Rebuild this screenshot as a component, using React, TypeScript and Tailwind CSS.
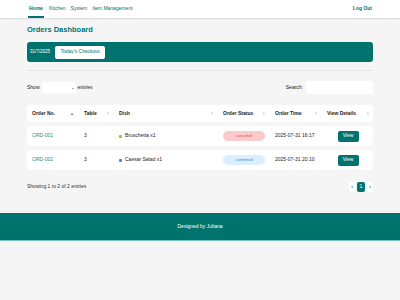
import React from 'react';

const teal = 'bg-[#00736f]';

const orders = [
    { id: 'ORD-001', table: 3, dish: 'Bruschetta x1', dot: 'bg-[#f59e0b]', status: 'canceled', time: '2025-07-31 16:17' },
    { id: 'ORD-002', table: 3, dish: 'Caesar Salad x1', dot: 'bg-[#3b82f6]', status: 'confirmed', time: '2025-07-31 20:10' },
];

const cols = 'grid grid-cols-[52px_35px_104px_52px_52px_52px] items-center';

const SortIcon = ({ active }: { active?: boolean }) => (
    <span className={`text-[4px] leading-none ${active ? 'text-gray-500' : 'text-gray-300'}`}>{active ? '▲' : '⇕'}</span>
);

export default function App() {
    const headers = ['Order No.', 'Table', 'Dish', 'Order Status', 'Order Time', 'View Details'];

    return (
        <div className="min-h-[300px] bg-[#f5f5f5] font-['Liberation_Sans',Arial,sans-serif] text-[#222]">
            <nav className="h-[18px] bg-white shadow-[0_1px_2px_rgba(0,0,0,0.12)] flex items-center justify-between px-[28px]">
                <div className="flex items-center gap-[5px] text-[5px] text-[#00736f] h-full">
                    <span className="font-bold h-full flex items-center border-b-2 border-[#00736f] px-[1px] pt-[2px]">Home</span>
                    <span>Kitchen</span>
                    <span>System</span>
                    <span>Item Management</span>
                </div>
                <span className="text-[5px] font-bold text-[#00736f]">Log Out</span>
            </nav>

            <main className="px-[27px] pt-[6px]">
                <h1 className="text-[7.5px] leading-[12px] font-bold text-[#00736f] mb-[6px]">Orders Dashboard</h1>

                <div className={`${teal} h-[20px] rounded-[3px] flex items-center px-[3px] gap-[5px]`}>
                    <span className="text-[4.5px] text-white">31/7/2025</span>
                    <button className="bg-white rounded-[2px] h-[13px] w-[50px] text-[5px] text-[#00736f]">Today's Checkout</button>
                </div>

                <div className="mt-[8px] border-t border-[#e6e6e6]" />

                <div className="mt-[10px] flex items-center justify-between text-[5px]">
                    <div className="flex items-center gap-[2px]">
                        <span>Show</span>
                        <div className="w-[34px] h-[11px] bg-white flex items-center justify-end pr-[2px] text-[4px]">⌄</div>
                        <span>entries</span>
                    </div>
                    <div className="flex items-center gap-[3px]">
                        <span>Search:</span>
                        <div className="w-[67px] h-[13px] bg-white rounded-[2px]" />
                    </div>
                </div>

                <div className={`${cols} mt-[11px] bg-white rounded-[3px] h-[17px] text-[5px] font-bold`}>
                    {headers.map((h, i) => (
                        <div key={h} className="flex items-center justify-between pl-[5px] pr-[5px]">
                            <span>{h}</span>
                            <SortIcon active={i === 0} />
                        </div>
                    ))}
                </div>

                {orders.map((o) => (
                    <div key={o.id} className={`${cols} mt-[4px] bg-white rounded-[3px] h-[20px] text-[5px]`}>
                        <span className="pl-[5px] text-[#1c8f88]">{o.id}</span>
                        <span className="pl-[5px]">{o.table}</span>
                        <div className="pl-[5px] flex items-center gap-[3px]">
                            <span className={`w-[3px] h-[3px] rounded-[1px] ${o.dot}`} />
                            <span>{o.dish}</span>
                        </div>
                        <div className="pl-[5px]">
                            <span
                                className={`flex items-center justify-center w-[42px] h-[10px] rounded-full text-[4px] ${
                                    o.status === 'canceled' ? 'bg-[#fbcaca] text-[#e5484d]' : 'bg-[#dcefff] text-[#3b8bdd]'
                                }`}
                            >
                                {o.status}
                            </span>
                        </div>
                        <span className="pl-[5px]">{o.time}</span>
                        <div className="flex justify-center">
                            <button className={`${teal} text-white rounded-[2px] w-[21px] h-[11px] text-[5px]`}>View</button>
                        </div>
                    </div>
                ))}

                <div className="mt-[12px] flex items-center justify-between h-[10px]">
                    <span className="text-[5px] text-[#333]">Showing 1 to 2 of 2 entries</span>
                    <div className="flex items-center gap-[2px] text-[5px]">
                        <span className="w-[6px] h-[10px] bg-white rounded-[2px] flex items-center justify-center text-[#00736f] font-bold">‹</span>
                        <span className={`${teal} w-[8px] h-[10px] rounded-[2px] flex items-center justify-center text-white`}>1</span>
                        <span className="w-[6px] h-[10px] bg-white rounded-[2px] flex items-center justify-center text-[#00736f] font-bold">›</span>
                    </div>
                </div>
            </main>

            <footer className={`${teal} mt-[21px] h-[28px] border-b border-[#7cc2bd] flex items-center justify-center`}>
                <span className="text-[5px] text-white">Designed by Juliana</span>
            </footer>
        </div>
    );
}
